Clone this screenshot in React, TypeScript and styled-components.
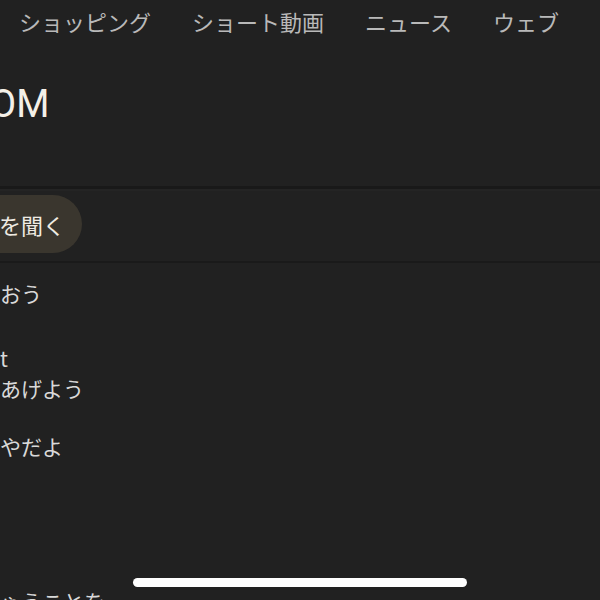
import React from "react";
import styled, { createGlobalStyle } from "styled-components";

const GlobalStyle = createGlobalStyle`
  html, body {
    margin: 0;
    padding: 0;
    background: #212121;
  }
  body {
    font-family: "Noto Sans CJK JP", "Noto Sans", sans-serif;
  }
`;

const Screen = styled.div`
  position: relative;
  width: 600px;
  height: 600px;
  overflow: hidden;
  background: #212121;
`;

const TabBar = styled.nav`
  display: flex;
  align-items: center;
  gap: 41px;
  height: 42px;
  padding-left: 19px;
  white-space: nowrap;
`;

const Tab = styled.span`
  font-size: 22px;
  line-height: 1;
  color: #b9b9b9;
  flex-shrink: 0;
`;

const Header = styled.header`
  height: 144px;
  padding-top: 40px;
  box-sizing: border-box;
`;

const Title = styled.h1`
  margin: 0 0 0 -10px;
  font-family: Roboto, "Noto Sans", sans-serif;
  font-size: 38px;
  font-weight: 400;
  line-height: 1.2;
  color: #f4f0e8;
  white-space: nowrap;
`;

const ChipRow = styled.div`
  display: flex;
  align-items: center;
  padding: 6px 0 8px;
  border-top: 3px solid #191919;
  border-bottom: 2px solid #1a1a1a;
  box-shadow: inset 0 2px 0 #242424;
`;

const Chip = styled.button`
  display: inline-flex;
  align-items: center;
  gap: 8px;
  height: 58px;
  margin-left: -67px;
  padding: 0 17px 0 16px;
  border: none;
  border-radius: 29px;
  background: #3a362e;
  color: #efebe3;
  font-family: "Noto Sans CJK JP", sans-serif;
  font-size: 22px;
  line-height: 1;
  white-space: nowrap;
`;

const PlayIcon = () => (
  <svg width="20" height="20" viewBox="0 0 20 20">
    <path d="M5 3 L17 10 L5 17 Z" fill="#efebe3" />
  </svg>
);

const LyricList = styled.div`
  display: flex;
  flex-direction: column;
  padding-top: 15px;
`;

const Stanza = styled.p<{ $space: number }>`
  margin: ${({ $space }) => $space}px 0 0;
  font-size: 21px;
  line-height: 30px;
  color: #d9d9d9;
  white-space: nowrap;
`;

const HomeIndicator = styled.div`
  position: absolute;
  left: 133px;
  bottom: 13px;
  width: 334px;
  height: 9px;
  border-radius: 5px;
  background: #ffffff;
`;

const tabs = ["ショッピング", "ショート動画", "ニュース", "ウェブ", "画像"];

const stanzas: { lines: string[]; space: number }[] = [
  { lines: ["おう"], space: 0 },
  { lines: ["t", "あげよう"], space: 35 },
  { lines: ["やだよ"], space: 28 },
  { lines: ["ゃうことを"], space: 125 },
];

export default function App() {
  return (
    <Screen>
      <GlobalStyle />
      <TabBar>
        {tabs.map((t) => (
          <Tab key={t}>{t}</Tab>
        ))}
      </TabBar>
      <Header>
        <Title>OM</Title>
      </Header>
      <ChipRow>
        <Chip>
          <PlayIcon />
          曲を聞く
        </Chip>
      </ChipRow>
      <LyricList>
        {stanzas.map((s, i) => (
          <Stanza key={i} $space={s.space}>
            {s.lines.map((l, j) => (
              <React.Fragment key={j}>
                {j > 0 && <br />}
                {l}
              </React.Fragment>
            ))}
          </Stanza>
        ))}
      </LyricList>
      <HomeIndicator />
    </Screen>
  );
}
